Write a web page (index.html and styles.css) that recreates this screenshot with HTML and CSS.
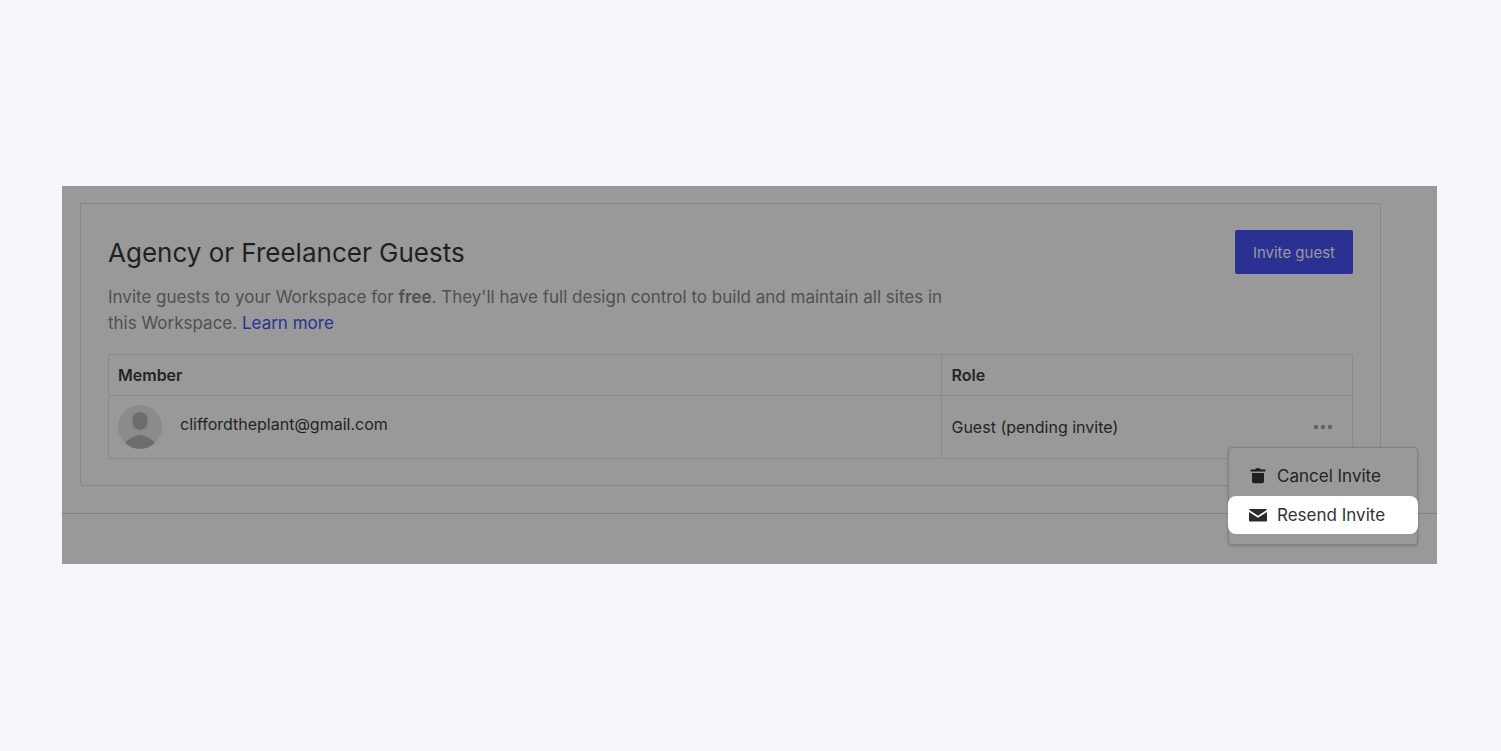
FILE: index.html
```html
<!DOCTYPE html>
<html lang="en">
<head>
<meta charset="utf-8">
<meta name="viewport" content="width=device-width, initial-scale=1">
<title>Agency or Freelancer Guests</title>
<link rel="stylesheet" href="styles.css">
</head>
<body>
<main class="panel">
  <div class="section">
    <section class="card">
      <header class="card-header">
        <div class="intro">
          <h1 class="title">Agency or Freelancer Guests</h1>
          <p class="description">Invite guests to your Workspace for <strong>free</strong>. They'll have full design control to build and maintain all sites in this Workspace. <a class="link" href="#">Learn more</a></p>
        </div>
        <button class="invite" type="button">Invite guest</button>
      </header>
      <table class="members">
        <thead>
          <tr><th class="col-member" scope="col">Member</th><th scope="col">Role</th></tr>
        </thead>
        <tbody>
          <tr>
            <td>
              <div class="member">
                <svg class="avatar" viewBox="0 0 44 44" aria-hidden="true">
                  <circle cx="22" cy="22" r="22" fill="#898b8c"/>
                  <rect x="14.500" y="7" width="15" height="18" rx="7.300" fill="#6b6d6f"/>
                  <path d="M7 37.800C11 34 17 30 22 30s11 4 15 7.800A22 22 0 0 1 7 37.800Z" fill="#6b6d6f"/>
                </svg>
                <span class="email">cliffordtheplant@gmail.com</span>
              </div>
            </td>
            <td>
              <div class="role">
                <span>Guest (pending invite)</span>
                <div class="actions">
                  <button class="more" type="button" aria-label="More actions" aria-expanded="true">
                    <svg width="20" height="6" viewBox="0 0 20 6" fill="#626262" aria-hidden="true"><circle cx="3" cy="3" r="2.200"/><circle cx="10" cy="3" r="2.200"/><circle cx="17" cy="3" r="2.200"/></svg>
                  </button>
                  <div class="menu">
                    <button class="item" type="button">
                      <svg width="18" height="18" viewBox="0 0 18 18" fill="#1f1f1f" aria-hidden="true"><path d="M2 2.500h4.200L7 1.300h4l.8 1.200H16c.7 0 .7 2 0 2H2c-.7 0-.7-2 0-2Z"/><path d="M3 6h12v8.300a2 2 0 0 1-2 2H5a2 2 0 0 1-2-2Z"/></svg>
                      Cancel Invite
                    </button>
                    <button class="item item-active" type="button">
                      <svg width="18" height="18" viewBox="0 0 18 18" fill="#2b2b2b" aria-hidden="true"><path d="M.3 3h17.400v1.100L9 9.700.3 4.100Z"/><path d="M0 5.900 9 11.800l9-5.900v8.600a1 1 0 0 1-1 1H1a1 1 0 0 1-1-1Z"/></svg>
                      Resend Invite
                    </button>
                  </div>
                </div>
              </div>
            </td>
          </tr>
        </tbody>
      </table>
    </section>
  </div>
</main>
</body>
</html>
```
FILE: styles.css
```css
* { box-sizing: border-box; }

body {
  margin: 0;
  min-height: 100vh;
  padding: 0 64px 1px 62px;
  display: flex;
  align-items: center;
  background: #f5f7fa;
  color: #242424;
  font-family: Inter, "Liberation Sans", sans-serif;
  font-size: 16px;
}

button { font: inherit; color: inherit; border: 0; background: none; cursor: pointer; }

.panel { flex: 1; background: #999; padding-bottom: 50px; }

.section { padding: 17px 56px 27px 18px; border-bottom: 1px solid #808080; }

.card {
  border: 1px solid #868686;
  border-radius: 0 0 3px 3px;
  padding: 26px 27px;
}

.card-header { display: flex; justify-content: space-between; align-items: flex-start; }

.intro { max-width: 860px; padding-top: 5px; }

.title { margin: 0; font-size: 26px; line-height: 36px; font-weight: 400; color: #1f1f1f; }

.description { margin: 13px 0 0; font-size: 17px; line-height: 26px; font-weight: 400; color: #505050; }

.description strong { font-weight: 600; }

.link { color: #2b3193; text-decoration: none; }

.invite {
  height: 44px;
  padding: 0 18px;
  border-radius: 2px;
  background: #2b3193;
  color: #999;
  font-size: 15px;
}

.members {
  width: 100%;
  margin-top: 18px;
  border-collapse: collapse;
  table-layout: fixed;
}

.members th, .members td { border: 1px solid #888a90; padding: 9px; text-align: left; }

.members th { font-weight: 600; line-height: 22px; }

.col-member { width: 67%; }

.member { display: flex; gap: 18px; }

.avatar { width: 44px; height: 44px; }

.email { line-height: 38px; }

.role { display: flex; align-items: center; justify-content: space-between; }

.actions { position: relative; display: flex; }

.more { display: flex; padding: 10px; }

.menu {
  position: absolute;
  top: 33px;
  right: -75px;
  width: 190px;
  padding: 8px 0 10px;
  border: 1px solid #808080;
  border-radius: 4px;
  background: #999;
  box-shadow: 0 1px 3px rgba(0, 0, 0, 0.2);
}

.item {
  display: flex;
  align-items: center;
  gap: 10px;
  width: 100%;
  height: 40px;
  padding: 0 20px;
  font-size: 17px;
  white-space: nowrap;
}

.item-active {
  width: auto;
  height: 38px;
  margin: 0 -1px;
  padding: 0 21px;
  min-width: 190px;
  border-radius: 8px;
  background: #fff;
  color: #333;
}
```
